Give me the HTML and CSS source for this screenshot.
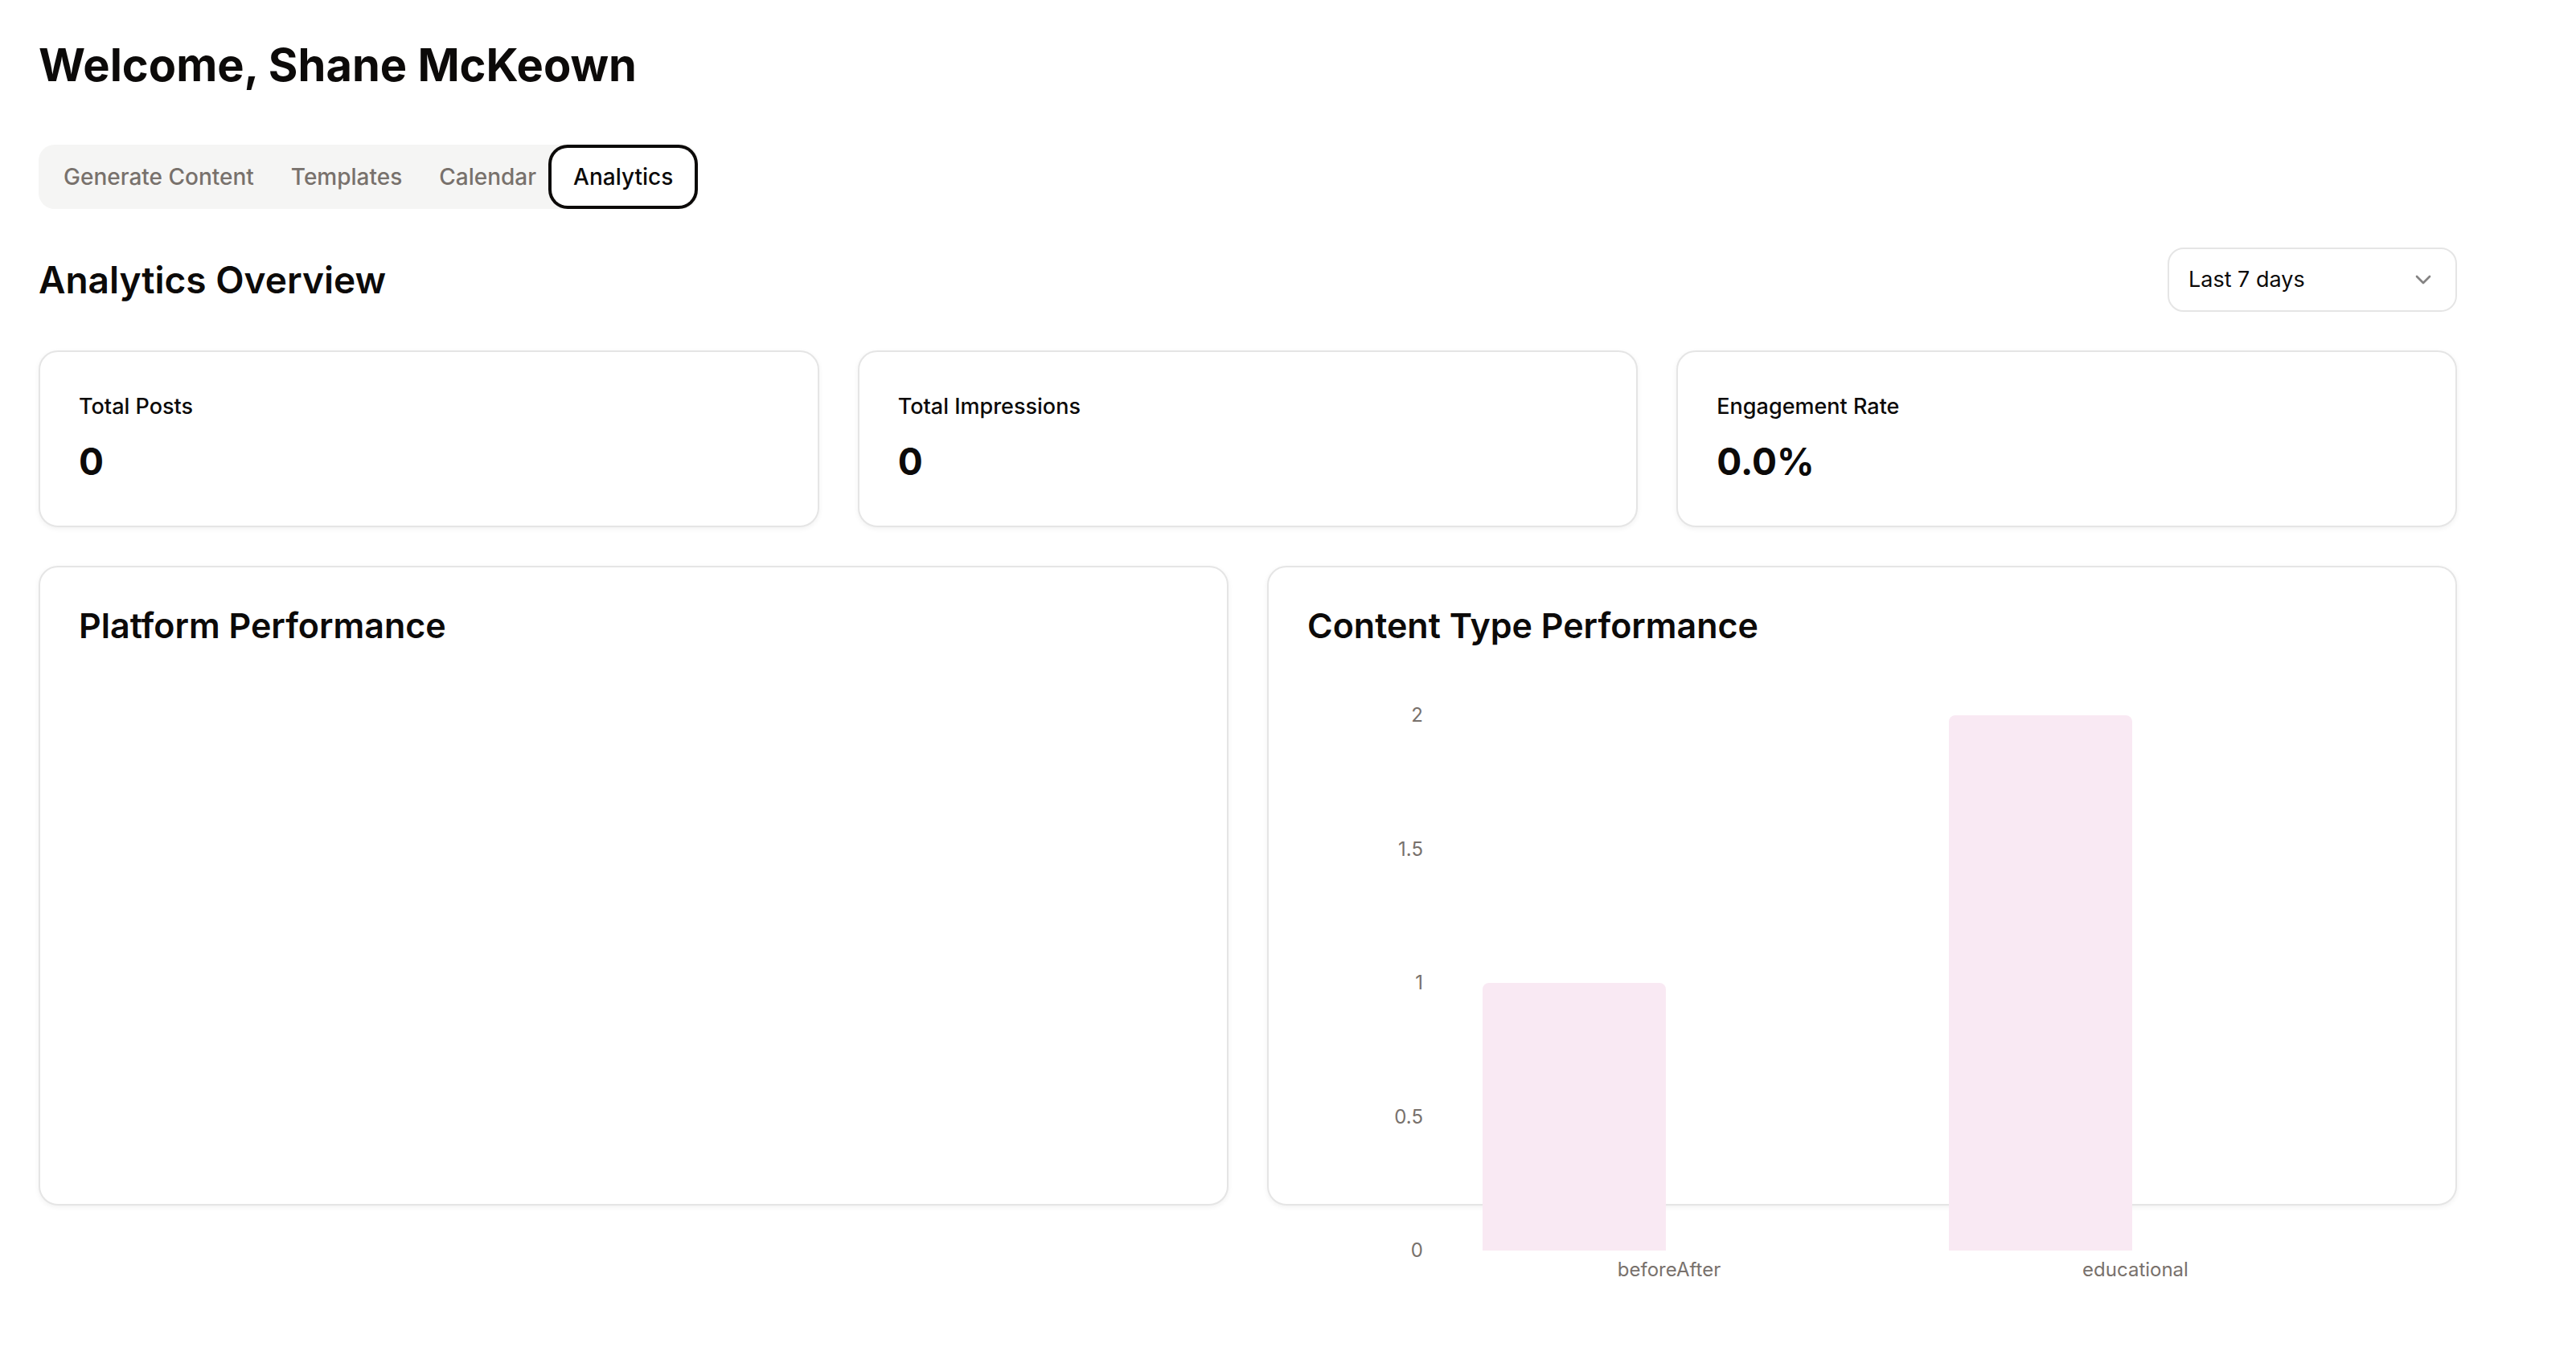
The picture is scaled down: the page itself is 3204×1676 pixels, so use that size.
FILE: index.html
```html
<!DOCTYPE html>
<html lang="en">
<head>
<meta charset="utf-8">
<meta name="viewport" content="width=device-width, initial-scale=1">
<title>Analytics Overview</title>
<link rel="stylesheet" href="styles.css">
</head>
<body>
<main class="page">
  <h1 class="page-title">Welcome, Shane McKeown</h1>

  <div class="tabs" role="tablist">
    <button class="tab" type="button" role="tab" aria-selected="false">Generate Content</button>
    <button class="tab" type="button" role="tab" aria-selected="false">Templates</button>
    <button class="tab" type="button" role="tab" aria-selected="false">Calendar</button>
    <button class="tab tab-active" type="button" role="tab" aria-selected="true">Analytics</button>
  </div>

  <div class="overview-header">
    <h2 class="overview-title">Analytics Overview</h2>
    <div class="select">
      <select class="select-input" aria-label="Date range">
        <option selected>Last 7 days</option>
      </select>
      <svg class="select-icon" viewBox="0 0 24 24" fill="none" stroke="currentColor" stroke-width="2" stroke-linecap="round" stroke-linejoin="round" aria-hidden="true"><path d="m6 9 6 6 6-6"/></svg>
    </div>
  </div>

  <section class="stats">
    <article class="card stat">
      <h3 class="stat-label">Total Posts</h3>
      <p class="stat-value">0</p>
    </article>
    <article class="card stat">
      <h3 class="stat-label">Total Impressions</h3>
      <p class="stat-value">0</p>
    </article>
    <article class="card stat">
      <h3 class="stat-label">Engagement Rate</h3>
      <p class="stat-value">0.0%</p>
    </article>
  </section>

  <section class="charts">
    <article class="card">
      <h3 class="card-title">Platform Performance</h3>
      <div class="card-body"></div>
    </article>
    <article class="card">
      <h3 class="card-title">Content Type Performance</h3>
      <div class="card-body">
        <div class="chart">
          <div class="y-axis">
            <span>2</span>
            <span>1.5</span>
            <span>1</span>
            <span>0.5</span>
            <span>0</span>
          </div>
          <div class="plot">
            <div class="category"><div class="bar" style="height: 50%"></div></div>
            <div class="category"><div class="bar" style="height: 100%"></div></div>
          </div>
          <div class="x-axis">
            <span>beforeAfter</span>
            <span>educational</span>
          </div>
        </div>
      </div>
    </article>
  </section>
</main>
</body>
</html>
```
FILE: styles.css
```css
:root {
  --foreground: #0c0a09;
  --muted: #f5f5f4;
  --muted-foreground: #78716c;
  --border: #e5e5e5;
  --bar: #f9e9f3;
}

*, *::before, *::after { box-sizing: border-box; }

body {
  margin: 0;
  background: #fff;
  color: var(--foreground);
  font-family: Inter, "Liberation Sans", sans-serif;
}

h1, h2, h3, p { margin: 0; }

.page {
  min-height: 100vh;
  padding: 48px 148px 48px 48px;
}

.page-title {
  margin-bottom: 66px;
  font-size: 56px;
  line-height: 66px;
  font-weight: 700;
}

/* Tabs */
.tabs {
  display: inline-flex;
  padding: 8px;
  border-radius: 20px;
  background: var(--muted);
}

.tab {
  padding: 12px 23px;
  border: 0;
  border-radius: 16px;
  background: transparent;
  color: var(--muted-foreground);
  font: 500 28px/40px Inter, "Liberation Sans", sans-serif;
  white-space: nowrap;
}

.tab-active {
  background: #fff;
  color: var(--foreground);
  box-shadow: 0 0 0 4px #fff, 0 0 0 8px var(--foreground);
}

/* Overview heading and range picker */
.overview-header {
  display: flex;
  align-items: center;
  justify-content: space-between;
  margin: 48px 0;
}

.overview-title {
  font-size: 46px;
  line-height: 64px;
  font-weight: 600;
}

.select { position: relative; }

.select-input {
  display: block;
  width: 360px;
  height: 80px;
  padding: 0 72px 0 24px;
  border: 2px solid var(--border);
  border-radius: 20px;
  background: #fff;
  color: var(--foreground);
  font: 400 27px/40px Inter, "Liberation Sans", sans-serif;
  appearance: none;
}

.select-icon {
  position: absolute;
  top: 24px;
  right: 26px;
  width: 32px;
  height: 32px;
  opacity: .5;
  pointer-events: none;
}

/* Cards */
.card {
  padding: 48px;
  border: 2px solid var(--border);
  border-radius: 24px;
  background: #fff;
  box-shadow: 0 2px 6px rgba(0, 0, 0, .06);
}

.stats {
  display: grid;
  grid-template-columns: repeat(3, 1fr);
  gap: 48px;
  margin-bottom: 48px;
}

.stat {
  display: flex;
  flex-direction: column;
  gap: 16px;
}

.stat-label {
  font-size: 27px;
  line-height: 40px;
  font-weight: 500;
}

.stat-value {
  font-size: 46px;
  line-height: 64px;
  font-weight: 700;
}

.charts {
  display: grid;
  grid-template-columns: repeat(2, 1fr);
  gap: 48px;
}

.card-title {
  margin-bottom: 48px;
  font-size: 43px;
  line-height: 48px;
  font-weight: 600;
}

.card-body { height: 600px; }

.chart {
  display: grid;
  grid-template-columns: 120px 1fr;
  grid-template-rows: 1fr 60px;
  aspect-ratio: 16 / 9;
  padding: 40px 60px 10px 40px;
  color: var(--muted-foreground);
  font-size: 24px;
  line-height: 24px;
}

.y-axis {
  display: flex;
  flex-direction: column;
  justify-content: space-between;
  margin: -12px 0;
  padding-right: 16px;
  text-align: right;
}

.plot { display: flex; }

.category {
  flex: 1;
  display: flex;
  align-items: flex-end;
  padding-left: 58px;
}

.bar {
  width: 228px;
  border-radius: 8px 8px 0 0;
  background: var(--bar);
}

.x-axis {
  grid-column: 2;
  display: flex;
  padding-top: 12px;
  text-align: center;
}

.x-axis span { flex: 1; }
```
